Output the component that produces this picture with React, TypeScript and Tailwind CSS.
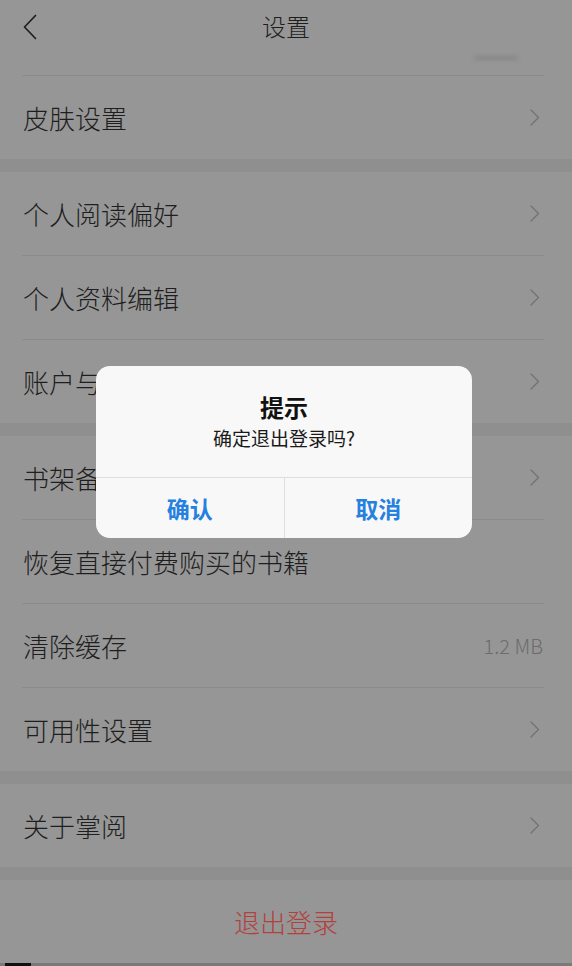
import React from "react"

const font = { fontFamily: '"Noto Sans CJK SC", "Noto Sans", sans-serif' }

const Chevron = () => (
  <svg width="10" height="17" viewBox="0 0 10 17" fill="none" className="shrink-0">
    <path d="M1 1l7.5 7.5L1 16" stroke="#727272" strokeWidth="1.3" strokeLinecap="round" strokeLinejoin="round" />
  </svg>
)

const Row = ({ label, right }: { label: string; right?: React.ReactNode }) => (
  <div className="h-[83px] flex items-center justify-between pl-[23px] pr-[32px]">
    <span className="text-[26px] font-light text-[#1e1e1e] leading-none">{label}</span>
    {right ?? <Chevron />}
  </div>
)

const Divider = () => <div className="h-px ml-[22px] mr-[28px] bg-[#8b8b8b]" />
const Gap = () => <div className="h-[13px] bg-[#8f8f8f]" />

export default function App() {
  return (
    <div className="relative w-[572px] h-[966px] overflow-hidden bg-[#969696]" style={font}>
      {/* header */}
      <div className="h-[57px] flex items-center justify-center pb-[6px] relative">
        <svg
          width="14"
          height="26"
          viewBox="0 0 14 26"
          fill="none"
          className="absolute left-[23px] top-[14px]"
        >
          <path d="M12.5 1.5L1.5 13l11 11.5" stroke="#1e1e1e" strokeWidth="1.7" strokeLinecap="round" strokeLinejoin="round" />
        </svg>
        <span className="text-[24px] font-light text-[#1e1e1e] leading-none">设置</span>
      </div>

      {/* scrolled-off row */}
      <div className="h-[18px] flex justify-end pr-[54px]">
        <div className="w-[44px] h-[4px] -mt-[1px] rounded-full bg-black/10 blur-[2px]" />
      </div>
      <Divider />
      <Row label="皮肤设置" />
      <Gap />
      <Row label="个人阅读偏好" />
      <Divider />
      <Row label="个人资料编辑" />
      <Divider />
      <Row label="账户与安全" />
      <Gap />
      <Row label="书架备份" />
      <Divider />
      <Row label="恢复直接付费购买的书籍" right={<span />} />
      <Divider />
      <Row
        label="清除缓存"
        right={<span className="text-[20px] text-[#6c6c6c] font-light -mr-[3px]">1.2 MB</span>}
      />
      <Divider />
      <Row label="可用性设置" />
      <Gap />
      <Row label="关于掌阅" />
      <Gap />
      <div className="h-[83px] flex items-center justify-center">
        <span className="text-[26px] font-light text-[#b3403d] leading-none">退出登录</span>
      </div>
      <div className="h-[3px] bg-[#7a7a7a] flex pl-[5px]">
        <div className="w-[26px] bg-[#111]" />
      </div>

      {/* dialog */}
      <div className="absolute left-[96px] top-[366px] w-[376px] h-[172px] rounded-[14px] bg-[#f8f8f8] flex flex-col overflow-hidden">
        <div className="h-[111px] flex flex-col items-center pt-[28px]">
          <span className="text-[24px] font-bold text-[#111] leading-[26px]">提示</span>
          <span className="text-[19px] text-[#1a1a1a] leading-[22px] mt-[7px]">确定退出登录吗?</span>
        </div>
        <div className="h-px bg-[#dedede]" />
        <div className="flex-1 flex">
          <button className="flex-1 flex items-center justify-center text-[23px] font-semibold text-[#2580e0]">
            确认
          </button>
          <div className="w-px bg-[#dedede]" />
          <button className="flex-1 flex items-center justify-center text-[23px] font-semibold text-[#2580e0]">
            取消
          </button>
        </div>
      </div>
    </div>
  )
}
